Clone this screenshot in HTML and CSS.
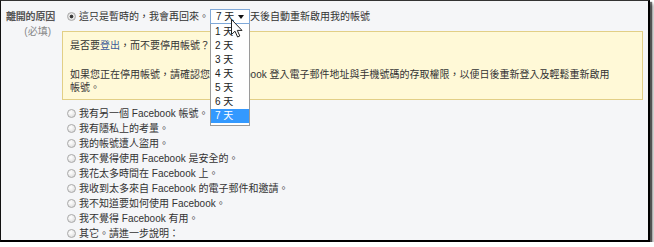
FILE: index.html
```html
<!DOCTYPE html>
<html lang="zh-Hant">
<head>
<meta charset="utf-8">
<title>停用帳號</title>
<link rel="stylesheet" href="styles.css">
</head>
<body>
<div class="frame">
  <div class="form">
    <div class="label">
      <div class="lbl-main">離開的原因</div>
      <div class="lbl-req">(必填)</div>
    </div>
    <div class="content">
      <div class="opt">
        <input type="radio" class="radio" name="reason" checked>
        <span>這只是暫時的，我會再回來。</span><span class="select-wrap"><span class="select">7 天<span class="arrow"></span></span><ul class="dropdown">
            <li>1 天</li>
            <li>2 天</li>
            <li>3 天</li>
            <li>4 天</li>
            <li>5 天</li>
            <li>6 天</li>
            <li class="sel">7 天</li>
          </ul><svg class="cursor" width="12" height="19" viewBox="0 0 12 19"><path d="M0.5 0.5 L0.5 15.5 L4 12.2 L6.6 18 L8.8 17 L6.3 11.4 L11 11.4 Z" fill="#fff" stroke="#222" stroke-width="1" stroke-linejoin="round"/></svg></span><span>天後自動重新啟用我的帳號</span>
      </div>
      <div class="notice">
        <p>是否要<a href="#" class="link">登出</a>，而不要停用帳號？</p>
        <p class="gap">如果您正在停用帳號，請確認您的 Facebook 登入電子郵件地址與手機號碼的存取權限，以便日後重新登入及輕鬆重新啟用<br>帳號。</p>
      </div>
      <div class="list">
        <label class="opt"><input type="radio" class="radio" name="reason"><span>我有另一個 Facebook 帳號。</span></label>
        <label class="opt"><input type="radio" class="radio" name="reason"><span>我有隱私上的考量。</span></label>
        <label class="opt"><input type="radio" class="radio" name="reason"><span>我的帳號遭人盜用。</span></label>
        <label class="opt"><input type="radio" class="radio" name="reason"><span>我不覺得使用 Facebook 是安全的。</span></label>
        <label class="opt"><input type="radio" class="radio" name="reason"><span>我花太多時間在 Facebook 上。</span></label>
        <label class="opt"><input type="radio" class="radio" name="reason"><span>我收到太多來自 Facebook 的電子郵件和邀請。</span></label>
        <label class="opt"><input type="radio" class="radio" name="reason"><span>我不知道要如何使用 Facebook。</span></label>
        <label class="opt"><input type="radio" class="radio" name="reason"><span>我不覺得 Facebook 有用。</span></label>
        <label class="opt"><input type="radio" class="radio" name="reason"><span>其它。請進一步說明：</span></label>
      </div>
    </div>
  </div>
</div>
</body>
</html>
```

FILE: styles.css
```css
html, body {
  margin: 0;
  padding: 0;
  background: #ffffff;
}

body {
  font-family: "Liberation Sans", "Noto Sans CJK TC", sans-serif;
  font-size: 10px;
  color: #333333;
}

.frame {
  box-sizing: border-box;
  width: 650px;
  height: 242px;
  background: #f5f6f8;
  border-left: 1px solid #111;
  border-top: 1px solid #333;
  border-right: 2px solid #000;
  border-bottom: 2px solid #000;
  box-shadow: 2px 2px 1px rgba(0, 0, 0, 0.55), 4px 4px 3px rgba(0, 0, 0, 0.3);
  overflow: visible;
}

.form {
  display: grid;
  grid-template-columns: 61px 1fr;
  padding-top: 8px;
}

.label {
  text-align: right;
  padding-right: 7px;
  line-height: 15px;
}

.lbl-main {
  color: #555;
  font-weight: bold;
  letter-spacing: -0.2px;
}

.lbl-req {
  color: #888;
  padding-right: 4px;
}

.content {
  min-width: 0;
}

.opt {
  display: flex;
  align-items: center;
  height: 15px;
  line-height: 15px;
  padding-left: 5px;
  white-space: nowrap;
}

.radio {
  appearance: none;
  -webkit-appearance: none;
  box-sizing: border-box;
  width: 9px;
  height: 9px;
  margin: 0 3px 0 0;
  border: 1px solid #a9a9a9;
  border-radius: 50%;
  background: radial-gradient(circle at 40% 35%, #ffffff 0%, #eeeeee 45%, #cfcfcf 100%);
  flex: none;
}

.radio:checked {
  background: radial-gradient(circle, #333 0, #444 1.6px, #e9e9e9 2.2px, #d0d0d0 100%);
}

.select-wrap {
  position: relative;
  display: inline-block;
  margin-left: 1px;
}

.select {
  box-sizing: border-box;
  display: flex;
  align-items: center;
  width: 40px;
  height: 15px;
  padding-left: 5px;
  background: #fff;
  border: 1px solid #7fa8d8;
  color: #222;
  line-height: 13px;
  position: relative;
}

.arrow {
  position: absolute;
  right: 5px;
  top: 5px;
  width: 0;
  height: 0;
  border-left: 3px solid transparent;
  border-right: 3px solid transparent;
  border-top: 4px solid #111;
}

.dropdown {
  position: absolute;
  left: 0;
  top: 15px;
  box-sizing: border-box;
  width: 40px;
  margin: 0;
  padding: 1px 0 2px 0;
  list-style: none;
  background: #fff;
  border: 1px solid #9a9a9a;
  border-top: none;
  z-index: 5;
}

.dropdown li {
  height: 14px;
  line-height: 14px;
  padding-left: 4px;
  color: #222;
}

.dropdown li.sel {
  background: #3399ff;
  color: #fff;
}

.cursor {
  position: absolute;
  left: 21px;
  top: 10px;
  z-index: 6;
}

.notice {
  margin: 7px 5px 0 0;
  padding: 7px 7px 5px 7px;
  background: #fff9d7;
  border: 1px solid #e2cf86;
  line-height: 13px;
  color: #333;
}

.notice p {
  margin: 0;
}

.notice p.gap {
  margin-top: 16px;
}

.link {
  color: #3b5998;
  text-decoration: none;
}

.list {
  margin-top: 6px;
}
```
